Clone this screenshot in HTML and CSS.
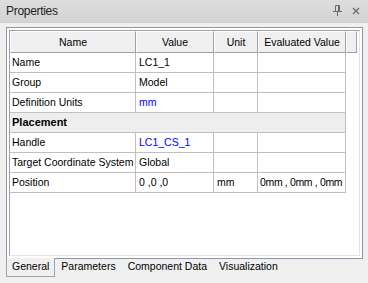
FILE: index.html
```html
<!DOCTYPE html>
<html lang="en">
<head>
    <meta charset="UTF-8">
    <title>Properties</title>
    <link rel="stylesheet" href="styles.css">
</head>
<body>
    <div class="titlebar">
        <span class="title">Properties</span>
        <span class="title-buttons">
            <svg class="pin" width="9" height="11" viewBox="0 0 9 11">
                <path d="M2.5 0.5 H6.5 V6 M2.5 0.5 V6 M0 6.5 H9 M4.5 6.5 V11" stroke="#6b6b6b" fill="none" stroke-width="1"/>
                <path d="M5.5 1 V6" stroke="#6b6b6b" stroke-width="1"/>
            </svg>
            <svg class="close" width="8" height="8" viewBox="0 0 8 8">
                <path d="M1 1 L7 7 M7 1 L1 7" stroke="#6b6b6b" stroke-width="1.3"/>
            </svg>
        </span>
    </div>

    <div class="panel">
        <div class="frame">
            <div class="row head">
                <div class="hcell">Name</div>
                <div class="hcell">Value</div>
                <div class="hcell">Unit</div>
                <div class="hcell">Evaluated Value</div>
                <div class="hcell"></div>
            </div>
            <div class="row">
                <div class="cell">Name</div>
                <div class="cell">LC1_1</div>
                <div class="cell"></div>
                <div class="cell"></div>
            </div>
            <div class="row">
                <div class="cell">Group</div>
                <div class="cell">Model</div>
                <div class="cell"></div>
                <div class="cell"></div>
            </div>
            <div class="row">
                <div class="cell">Definition Units</div>
                <div class="cell link">mm</div>
                <div class="cell"></div>
                <div class="cell"></div>
            </div>
            <div class="row">
                <div class="cell section">Placement</div>
            </div>
            <div class="row">
                <div class="cell">Handle</div>
                <div class="cell link">LC1_CS_1</div>
                <div class="cell"></div>
                <div class="cell"></div>
            </div>
            <div class="row">
                <div class="cell">Target Coordinate System</div>
                <div class="cell">Global</div>
                <div class="cell"></div>
                <div class="cell"></div>
            </div>
            <div class="row">
                <div class="cell">Position</div>
                <div class="cell">0 ,0 ,0</div>
                <div class="cell">mm</div>
                <div class="cell tight">0mm , 0mm , 0mm</div>
            </div>
        </div>
    </div>

    <div class="tabs">
        <div class="tab active">General</div>
        <div class="tab">Parameters</div>
        <div class="tab">Component Data</div>
        <div class="tab">Visualization</div>
    </div>
</body>
</html>
```

FILE: styles.css
```css
body {
    margin: 0;
    background-color: #f0f0f0;
    font-family: 'Liberation Sans', Arial, sans-serif;
    font-size: 10.5px;
    color: #000;
}
.titlebar {
    height: 23px;
    display: flex;
    align-items: center;
    justify-content: space-between;
    padding: 0 8px 0 6px;
    background: linear-gradient(#dedede, #d3d3d3);
    border-bottom: 1px solid #cfcfcf;
    box-sizing: border-box;
}
.title {
    font-size: 12px;
    letter-spacing: -0.3px;
    color: #1e1e1e;
    padding-bottom: 1px;
}
.title-buttons {
    display: flex;
    align-items: center;
    gap: 10px;
}
.pin {
    margin-top: -1px;
}
.panel {
    margin: 4px 5px 0 6px;
    height: 232px;
    box-sizing: border-box;
    border: 1px solid #8c97ad;
    background-color: #fff;
    padding: 2px;
}
.frame {
    height: 100%;
    box-sizing: border-box;
    border-top: 1px solid #a0a0a0;
    border-left: 1px solid #a0a0a0;
    border-right: 1px solid #e3e3e3;
    border-bottom: 1px solid #e3e3e3;
}
.row {
    display: grid;
    grid-template-columns: 126px 78px 44px 88px 11px;
    height: 20px;
}
.row.head {
    height: 22px;
}
.hcell {
    box-sizing: border-box;
    background-color: #f0f0f0;
    border-top: 1px solid #fff;
    border-left: 1px solid #fff;
    border-right: 1px solid #a0a0a0;
    border-bottom: 1px solid #a0a0a0;
    text-align: center;
    line-height: 20px;
    white-space: nowrap;
    overflow: hidden;
}
.cell {
    box-sizing: border-box;
    border-right: 1px solid #c0c0c0;
    border-bottom: 1px solid #c0c0c0;
    padding-left: 2px;
    line-height: 19px;
    white-space: nowrap;
    overflow: hidden;
}
.cell:not(:first-child) {
    padding-left: 3px;
}
.cell.tight {
    letter-spacing: -0.35px;
    padding-left: 2px;
}
.cell.link {
    color: #0000ff;
}
.cell.section {
    grid-column: 1 / 5;
    background-color: #eeeeee;
    font-weight: bold;
    font-size: 11px;
}
.tabs {
    display: flex;
    padding-left: 6px;
    margin-top: -1px;
}
.tab {
    height: 19px;
    line-height: 17px;
    padding: 0 6px;
    box-sizing: border-box;
    color: #000;
}
.tab.active {
    background-color: #f0f0f0;
    border-left: 1px solid #9aa3b5;
    border-right: 1px solid #9aa3b5;
    border-bottom: 1px solid #9aa3b5;
    padding: 0 5px;
}
```
